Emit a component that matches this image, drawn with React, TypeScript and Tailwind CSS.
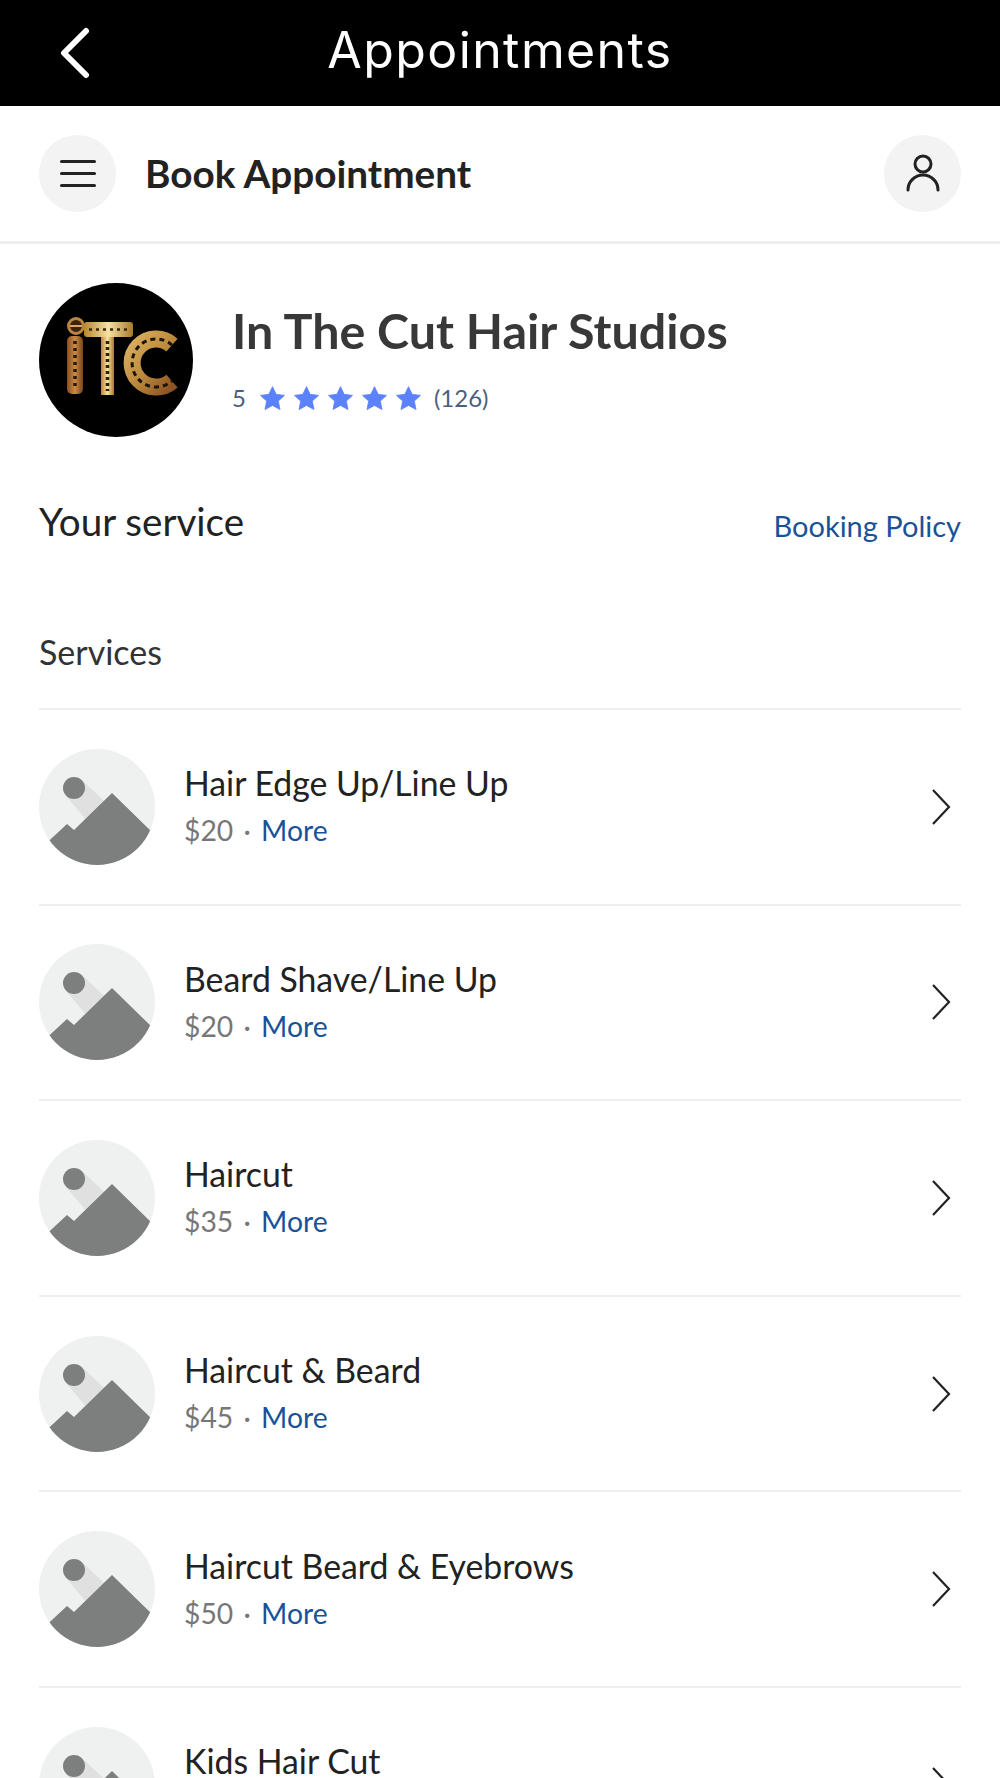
import React from "react";

const services = [
  { name: "Hair Edge Up/Line Up", price: "$20" },
  { name: "Beard Shave/Line Up", price: "$20" },
  { name: "Haircut", price: "$35" },
  { name: "Haircut & Beard", price: "$45" },
  { name: "Haircut Beard & Eyebrows", price: "$50" },
  { name: "Kids Hair Cut", price: "" },
];

function Placeholder({ id }: { id: number }) {
  return (
    <svg viewBox="0 0 116 116" className="w-[116px] h-[116px] shrink-0">
      <defs>
        <clipPath id={`c${id}`}>
          <circle cx="58" cy="58" r="58" />
        </clipPath>
      </defs>
      <g clipPath={`url(#c${id})`}>
        <rect width="116" height="116" fill="#eff0f0" />
        <polygon points="27,47 43,31 80,66 60,86" fill="#e0e0e0" />
        <circle cx="35" cy="39" r="11" fill="#7d7e7e" />
        <polygon points="73,44 116,86 116,116 0,116 0,101 28,75 35,81" fill="#7d7e7e" />
      </g>
    </svg>
  );
}

function Logo() {
  return (
    <svg viewBox="0 0 154 154" className="w-[154px] h-[154px] shrink-0">
      <defs>
        <linearGradient id="g1" x1="0" y1="0" x2="1" y2="0">
          <stop offset="0" stopColor="#8a4f1f" />
          <stop offset="0.5" stopColor="#c98a45" />
          <stop offset="1" stopColor="#7a4318" />
        </linearGradient>
        <linearGradient id="g2" x1="0" y1="0" x2="1" y2="0">
          <stop offset="0" stopColor="#b8862f" />
          <stop offset="0.5" stopColor="#f6e3a0" />
          <stop offset="1" stopColor="#a87a2a" />
        </linearGradient>
        <linearGradient id="g3" x1="0" y1="0" x2="1" y2="1">
          <stop offset="0" stopColor="#d9ae5e" />
          <stop offset="0.55" stopColor="#b8863a" />
          <stop offset="1" stopColor="#8d5424" />
        </linearGradient>
      </defs>
      <circle cx="77" cy="77" r="77" fill="#000" />
      <circle cx="37" cy="43" r="7.5" fill="#3a2410" stroke="#b98443" strokeWidth="3" />
      <line x1="31" y1="43" x2="43" y2="43" stroke="#d9a766" strokeWidth="2" />
      <rect x="28" y="53" width="16" height="58" rx="5" fill="url(#g1)" />
      <line x1="36" y1="58" x2="36" y2="106" stroke="#2a1a0c" strokeWidth="3.5" strokeDasharray="3 4" />
      <rect x="45" y="39" width="49" height="15" rx="3" fill="url(#g2)" />
      <line x1="50" y1="46.5" x2="90" y2="46.5" stroke="#3a2a10" strokeWidth="2.5" strokeDasharray="3 4" />
      <rect x="62" y="54" width="13" height="58" fill="url(#g2)" />
      <line x1="68.5" y1="58" x2="68.5" y2="108" stroke="#2c2008" strokeWidth="3.5" strokeDasharray="3 3" />
      <path d="M133 62 A24 24 0 1 0 133 98" fill="none" stroke="url(#g3)" strokeWidth="17" />
      <path d="M133 62 A24 24 0 1 0 133 98" fill="none" stroke="#1d1408" strokeWidth="3" strokeDasharray="5 4" />
    </svg>
  );
}

function Star() {
  return (
    <svg viewBox="0 0 24 24" className="w-[25px] h-[25px]">
      <path
        d="M12 0.6l3.5 7.4 8 1-5.9 5.5 1.6 8.1L12 18.7l-7.2 3.9 1.6-8.1L.5 9l8-1z"
        fill="#5b82fb"
        stroke="#5b82fb"
        strokeWidth="0.8"
        strokeLinejoin="round"
      />
    </svg>
  );
}

export default function App() {
  return (
    <div
      className="w-[1000px] h-[1778px] overflow-hidden bg-white"
      style={{ fontFamily: "Lato, sans-serif" }}
    >
      <header className="relative h-[106px] bg-black flex items-center justify-center">
        <svg viewBox="0 0 32 52" className="absolute left-[58px] top-[27px] w-[32px] h-[52px]">
          <path d="M28 4 L6 26 L28 48" fill="none" stroke="#fff" strokeWidth="6" strokeLinecap="round" strokeLinejoin="round" />
        </svg>
        <span
          className="text-white text-[50px] leading-none font-normal tracking-[1.4px] mt-[-6px]"
          style={{ fontFamily: "Inter, sans-serif" }}
        >
          Appointments
        </span>
      </header>

      <div className="h-[138px] border-b-[3px] border-[#eeeeee] px-[39px] flex items-center">
        <div className="w-[77px] h-[77px] rounded-full bg-[#f3f3f3] flex items-center justify-center">
          <div className="w-[36px] flex flex-col gap-[9px]">
            <div className="h-[3px] rounded-full bg-[#222]" />
            <div className="h-[3px] rounded-full bg-[#222]" />
            <div className="h-[3px] rounded-full bg-[#222]" />
          </div>
        </div>
        <div className="ml-[29px] text-[38.7px] font-bold text-[#222]">Book Appointment</div>
        <div className="ml-auto w-[77px] h-[77px] rounded-full bg-[#f3f3f3] flex items-center justify-center">
          <svg viewBox="0 0 34 40" className="w-[34px] h-[40px]">
            <circle cx="17" cy="10" r="8" fill="none" stroke="#222" strokeWidth="3" />
            <path d="M2 36 A15 15 0 0 1 32 36" fill="none" stroke="#222" strokeWidth="3" strokeLinecap="round" />
          </svg>
        </div>
      </div>

      <section className="px-[39px] pt-[39px]">
        <div className="flex items-center">
          <Logo />
          <div className="ml-[39px]">
            <div className="text-[48.4px] leading-[56px] font-bold text-[#383838] mt-[-2px]">In The Cut Hair Studios</div>
            <div className="mt-[22px] flex items-center h-[36px] text-[24px] text-[#4a5f80]">
              <span>5</span>
              <div className="ml-[14px] flex gap-[9px]">
                <Star />
                <Star />
                <Star />
                <Star />
                <Star />
              </div>
              <span className="ml-[13px]">(126)</span>
            </div>
          </div>
        </div>

        <div className="mt-[60px] flex justify-between h-[52px]">
          <span className="text-[38.6px] leading-[50px] text-[#222] mt-[-1px]">Your service</span>
          <span className="text-[29px] leading-[50px] text-[#1a5299] mt-[4px]">Booking Policy</span>
        </div>

        <div className="mt-[77px] h-[79px] text-[34px] leading-[51px] text-[#333]">Services</div>
      </section>

      <div className="px-[39px] mt-[3px]">
        {services.map((s, i) => (
          <div key={s.name} className="h-[195.6px] border-t-2 border-[#eeeeee] flex items-center">
            <Placeholder id={i} />
            <div className="ml-[29px]">
              <div className="text-[33.8px] leading-[44px] text-[#222]">{s.name}</div>
              <div className="mt-[3px] h-[44px] text-[28.3px] leading-[44px] text-[#777]">
                {s.price && (
                  <>
                    {s.price} <span className="mx-[3px]">·</span> <span className="text-[#1a5299]">More</span>
                  </>
                )}
              </div>
            </div>
            <svg viewBox="0 0 20 38" className="ml-auto mr-[10px] w-[20px] h-[38px]">
              <path d="M2 2 L18 19 L2 36" fill="none" stroke="#222" strokeWidth="2.2" />
            </svg>
          </div>
        ))}
      </div>
    </div>
  );
}
